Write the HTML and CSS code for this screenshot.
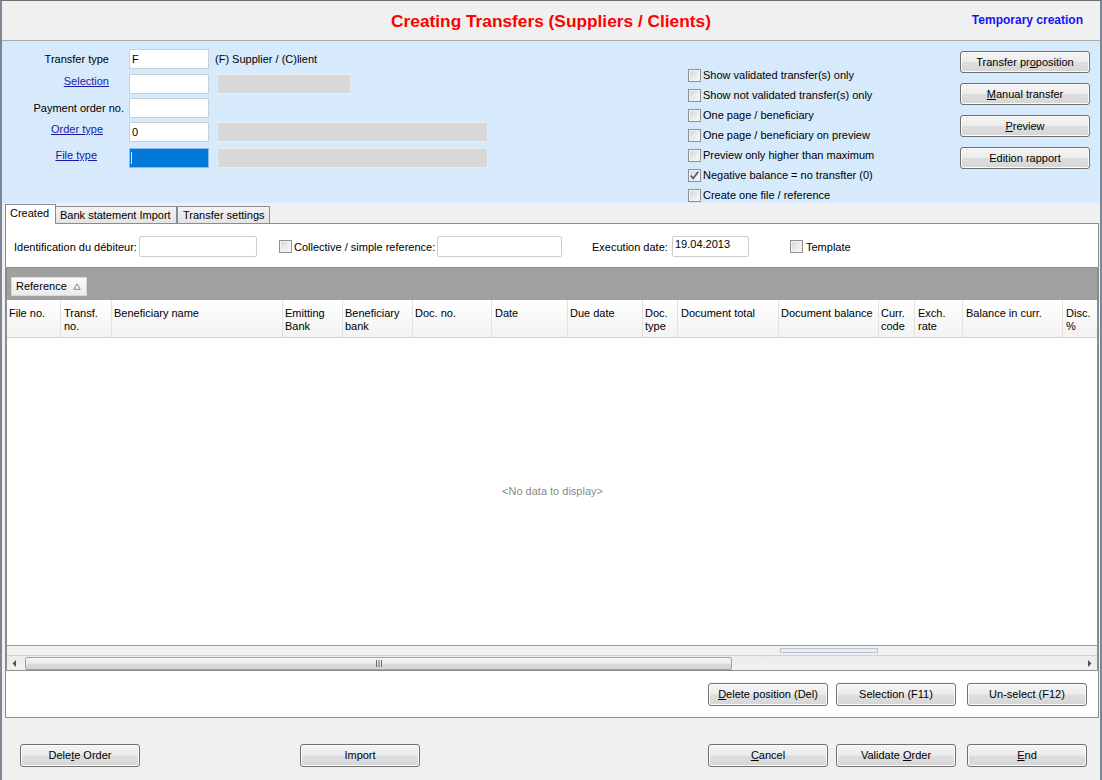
FILE: index.html
```html
<!DOCTYPE html>
<html>
<head>
<meta charset="utf-8">
<link rel="stylesheet" href="styles.css">
</head>
<body>
<div class="window">
  <div class="header">
    <div></div>
    <div class="title">Creating Transfers (Suppliers / Clients)</div>
    <div class="status">Temporary creation</div>
  </div>

  <div class="params">
    <div class="form">
      <div class="frow">
        <span class="lbl pr20">Transfer type</span>
        <span class="inp">F</span>
        <span class="hint">(F) Supplier / (C)lient</span>
      </div>
      <div class="frow mt5">
        <a class="lbl link pr20">Selection</a>
        <span class="inp"></span>
        <span class="ro w134"></span>
      </div>
      <div class="frow mt4">
        <span class="lbl pr5">Payment order no.</span>
        <span class="inp"></span>
      </div>
      <div class="frow mt4">
        <a class="lbl link pr26">Order type</a>
        <span class="inp">0</span>
        <span class="ro w271"></span>
      </div>
      <div class="frow mt6">
        <a class="lbl link pr32">File type</a>
        <span class="inp focus"><span class="caret"></span></span>
        <span class="ro w271"></span>
      </div>
    </div>

    <div class="checks">
      <div class="chk"><span class="box"></span>Show validated transfer(s) only</div>
      <div class="chk"><span class="box"></span>Show not validated transfer(s) only</div>
      <div class="chk"><span class="box"></span>One page / beneficiary</div>
      <div class="chk"><span class="box"></span>One page / beneficiary on preview</div>
      <div class="chk"><span class="box"></span>Preview only higher than maximum</div>
      <div class="chk"><span class="box checked"><svg width="11" height="11" viewBox="0 0 11 11"><path d="M1.8 5.6 L4.2 8.4 L9.2 1.8" fill="none" stroke="#4a5a85" stroke-width="1.7"/></svg></span>Negative balance = no transfter (0)</div>
      <div class="chk"><span class="box"></span>Create one file / reference</div>
    </div>

    <div class="actions">
      <div class="btn act"><span>Transfer pr<u>o</u>position</span></div>
      <div class="btn act"><span><u>M</u>anual transfer</span></div>
      <div class="btn act"><span><u>P</u>review</span></div>
      <div class="btn act"><span>Edition rapport</span></div>
    </div>
  </div>

  <div class="tabs">
    <div class="tab active">Created</div>
    <div class="tab t2">Bank statement Import</div>
    <div class="tab t3">Transfer settings</div>
  </div>

  <div class="panel">
    <div class="filters">
      <span class="flbl w125">Identification du débiteur:</span>
      <span class="finp w118"></span>
      <span class="box ml22"></span>
      <span class="flbl w143">Collective / simple reference:</span>
      <span class="finp w125"></span>
      <span class="flbl w80 ml30">Execution date:</span>
      <span class="finp w77">19.04.2013</span>
      <span class="box ml41"></span>
      <span class="flbl ml3">Template</span>
    </div>

    <div class="grid">
      <div class="groupbar">
        <div class="groupchip">Reference <svg class="sorttri" width="8" height="7" viewBox="0 0 8 7"><path d="M4 0.8 L7.3 6.3 L0.7 6.3 Z" fill="none" stroke="#8a8a8a" stroke-width="1"/></svg></div>
      </div>
      <div class="colheads">
        <div class="col c1">File no.</div>
        <div class="col c2">Transf.<br>no.</div>
        <div class="col c3">Beneficiary name</div>
        <div class="col c4">Emitting<br>Bank</div>
        <div class="col c5">Beneficiary<br>bank</div>
        <div class="col c6">Doc. no.</div>
        <div class="col c7">Date</div>
        <div class="col c8">Due date</div>
        <div class="col c9">Doc.<br>type</div>
        <div class="col c10">Document total</div>
        <div class="col c11">Document balance</div>
        <div class="col c12">Curr.<br>code</div>
        <div class="col c13">Exch.<br>rate</div>
        <div class="col c14">Balance in curr.</div>
        <div class="col c15">Disc.<br>%</div>
      </div>
      <div class="gbody">&lt;No data to display&gt;</div>
      <div class="gstrip"><span class="gmark"></span></div>
      <div class="hscroll">
        <span class="arrow"><svg width="5" height="7" viewBox="0 0 5 7"><path d="M4 0 L0.5 3.5 L4 7 Z" fill="#555"/></svg></span>
        <span class="thumb"><svg class="grip" width="8" height="7" viewBox="0 0 8 7"><path d="M1.5 0 V7 M4 0 V7 M6.5 0 V7" stroke="#6a6a6a" stroke-width="1"/></svg></span>
        <span class="track"></span>
        <span class="arrow"><svg width="5" height="7" viewBox="0 0 5 7"><path d="M1 0 L4.5 3.5 L1 7 Z" fill="#555"/></svg></span>
      </div>
    </div>

    <div class="rowbtns">
      <div class="btn sm mr8"><span><u>D</u>elete position (Del)</span></div>
      <div class="btn sm mr11"><span>Selection (F11)</span></div>
      <div class="btn sm"><span>Un-select (F12)</span></div>
    </div>
  </div>

  <div class="footer">
    <div class="btn sm fb1"><span>Dele<u>t</u>e Order</span></div>
    <div class="btn sm fb2"><span>Import</span></div>
    <div class="btn sm fb3"><span><u>C</u>ancel</span></div>
    <div class="btn sm mr11"><span>Validate <u>O</u>rder</span></div>
    <div class="btn sm"><span><u>E</u>nd</span></div>
  </div>
</div>
</body>
</html>
```

FILE: styles.css
```css
html, body {
  margin: 0;
  padding: 0;
}
body {
  width: 1102px;
  height: 780px;
  overflow: hidden;
  font-family: "Liberation Sans", Arial, sans-serif;
  font-size: 11px;
  line-height: 13px;
  color: #000;
  background: #f0f0f0;
}
.window {
  box-sizing: border-box;
  width: 1102px;
  height: 780px;
  border-left: 2px solid #7c8796;
  border-right: 2px solid #7c8796;
  border-top: 1px solid #6f6f6f;
  background: #f0f0f0;
  display: flex;
  flex-direction: column;
}

/* header */
.header {
  height: 39px;
  border-bottom: 1px solid #a9a9a9;
  display: grid;
  grid-template-columns: 1fr auto 1fr;
  align-items: center;
  flex: none;
}
.title {
  color: #ff0000;
  font-weight: bold;
  font-size: 17.3px;
  line-height: 20px;
  padding-top: 1px;
}
.status {
  justify-self: end;
  padding-right: 17px;
  color: #1414f5;
  font-weight: bold;
  font-size: 12px;
  padding-bottom: 1px;
}

/* parameter panel */
.params {
  height: 162px;
  background: #d6eafb;
  display: flex;
  flex: none;
}
.form {
  width: 686px;
  flex: none;
  padding-top: 8px;
  box-sizing: border-box;
}
.frow {
  display: flex;
  align-items: center;
  height: 20px;
}
.mt4 { margin-top: 4px; }
.mt5 { margin-top: 5px; }
.mt6 { margin-top: 6px; }
.lbl {
  width: 127px;
  box-sizing: border-box;
  text-align: right;
  flex: none;
}
.link {
  color: #1a1aa6;
  text-decoration: underline;
  align-self: flex-start;
  margin-top: 1px;
}
.pr5 { padding-right: 5px; }
.pr20 { padding-right: 20px; }
.pr26 { padding-right: 26px; }
.pr32 { padding-right: 32px; }
.inp {
  width: 80px;
  height: 20px;
  box-sizing: border-box;
  background: #fff;
  border: 1px solid #c9d0d8;
  padding: 3px 0 0 2px;
  flex: none;
  position: relative;
}
.inp.focus {
  background: #0078d7;
  border-color: #8fbbe6;
}
.caret {
  position: absolute;
  left: 1px;
  top: 3px;
  width: 1px;
  height: 12px;
  background: #e8e8d0;
}
.hint {
  margin-left: 6px;
}
.ro {
  height: 20px;
  box-sizing: border-box;
  margin-left: 8px;
  background: #d8d8d8;
  border: 1px solid #ebebeb;
  flex: none;
}
.w134 { width: 134px; }
.w271 { width: 271px; }

.checks {
  width: 272px;
  flex: none;
  padding-top: 24px;
  box-sizing: border-box;
}
.chk {
  display: flex;
  align-items: center;
  height: 20px;
  white-space: nowrap;
}
.box {
  width: 13px;
  height: 13px;
  box-sizing: border-box;
  border: 1px solid #8e8f8f;
  background: linear-gradient(135deg, #cfd3d8 0%, #eceef0 60%, #f8f8f8 100%);
  box-shadow: inset 0 0 0 1px #f3f3f3;
  margin-right: 2px;
  flex: none;
  display: inline-flex;
  align-items: center;
  justify-content: center;
}
.box svg { display: block; }

.actions {
  padding-top: 10px;
  display: flex;
  flex-direction: column;
  gap: 10px;
}
.btn {
  box-sizing: border-box;
  border: 1px solid #707070;
  border-radius: 3px;
  background: linear-gradient(#f4f4f4 0%, #ececec 48%, #dedede 52%, #d6d6d6 100%);
  box-shadow: inset 0 0 0 1px #fbfbfb;
  display: flex;
  align-items: center;
  justify-content: center;
  white-space: nowrap;
  flex: none;
}
.act {
  width: 130px;
  height: 22px;
}
.sm {
  width: 120px;
  height: 23px;
}

/* tabs */
.tabs {
  height: 20px;
  display: flex;
  align-items: flex-end;
  padding-left: 3px;
  flex: none;
}
.tab {
  box-sizing: border-box;
  border: 1px solid #898c95;
  border-bottom: none;
  white-space: nowrap;
}
.tab.active {
  width: 51px;
  height: 20px;
  margin-bottom: -1px;
  background: #fff;
  position: relative;
  z-index: 1;
  padding: 2px 0 0 4px;
}
.tab.t2 {
  width: 121px;
  height: 17px;
  padding: 2px 0 0 4px;
  background: linear-gradient(#f3f3f3, #e4e4e4);
  border-left: none;
}
.tab.t3 {
  width: 93px;
  height: 17px;
  padding: 2px 0 0 5px;
  background: linear-gradient(#f3f3f3, #e4e4e4);
  border-left: 1px solid #898c95;
}

/* tab panel */
.panel {
  box-sizing: border-box;
  height: 495px;
  margin: 0 1px 0 3px;
  border: 1px solid #898c95;
  background: #fff;
  flex: none;
  display: flex;
  flex-direction: column;
}
.filters {
  display: flex;
  align-items: center;
  height: 21px;
  margin-top: 12px;
  padding-left: 8px;
  white-space: nowrap;
}
.flbl { flex: none; padding-top: 2px; }
.w125 { width: 125px; }
.w143 { width: 143px; }
.w80 { width: 80px; }
.finp {
  box-sizing: border-box;
  height: 21px;
  border: 1px solid #cdcdcd;
  border-radius: 2px;
  background: #fff;
  padding: 1px 0 0 2px;
  flex: none;
}
.w118 { width: 118px; }
.w77 { width: 77px; }
.ml3 { margin-left: 1px; }
.ml22 { margin-left: 22px; }
.ml30 { margin-left: 30px; }
.ml41 { margin-left: 41px; }

.grid {
  margin-top: 10px;
  box-sizing: border-box;
  border: 1px solid #8c8c8c;
  display: flex;
  flex-direction: column;
  flex: none;
}
.groupbar {
  height: 32px;
  background: #a0a0a0;
  box-sizing: border-box;
  padding: 9px 0 0 4px;
}
.groupchip {
  width: 76px;
  height: 19px;
  box-sizing: border-box;
  background: linear-gradient(#fafafa, #ececec);
  border: 1px solid #d8d8d8;
  display: flex;
  align-items: center;
  padding-left: 4px;
}
.sorttri {
  margin-left: 6px;
  display: block;
}
.colheads {
  height: 38px;
  box-sizing: border-box;
  display: flex;
  background: linear-gradient(#ffffff, #f3f3f3);
  border-bottom: 1px solid #d2d2d2;
}
.col {
  box-sizing: border-box;
  border-right: 1px solid #e2e2e2;
  padding: 7px 0 0 2px;
  white-space: nowrap;
  overflow: hidden;
  flex: none;
}
.c1 { width: 54px; }
.c2 { width: 51px; padding-left: 3px; }
.c3 { width: 171px; }
.c4 { width: 60px; }
.c5 { width: 70px; }
.c6 { width: 79px; }
.c7 { width: 76px; padding-left: 3px; }
.c8 { width: 75px; }
.c9 { width: 35px; }
.c10 { width: 101px; padding-left: 3px; }
.c11 { width: 100px; }
.c12 { width: 36px; }
.c13 { width: 48px; padding-left: 3px; }
.c14 { width: 100px; padding-left: 3px; }
.c15 { flex: 1; border-right: none; padding-left: 3px; }
.gbody {
  height: 307px;
  background: #fff;
  color: #8a8a8a;
  display: flex;
  align-items: center;
  justify-content: center;
  padding-left: 1px;
  box-sizing: border-box;
}
.gstrip {
  height: 11px;
  box-sizing: border-box;
  border-top: 1px solid #9a9a9a;
  border-bottom: 1px solid #cfcfcf;
  background: #f0f0f0;
  padding: 2px 0 0 773px;
}
.gmark {
  display: block;
  width: 98px;
  height: 5px;
  box-sizing: border-box;
  border: 1px solid #bcc5ce;
  background: #e9eef2;
}
.hscroll {
  height: 14px;
  display: flex;
  align-items: center;
  background: linear-gradient(#ececec, #f2f2f2);
}
.arrow {
  width: 15px;
  height: 14px;
  display: flex;
  align-items: center;
  justify-content: center;
  flex: none;
}
.thumb {
  margin-left: 3px;
  width: 707px;
  height: 13px;
  box-sizing: border-box;
  border: 1px solid #a3a3a3;
  border-radius: 2px;
  background: linear-gradient(#f5f5f5 0%, #e9e9e9 50%, #dcdcdc 51%, #d4d4d4 100%);
  display: flex;
  align-items: center;
  justify-content: center;
  flex: none;
}
.grip { display: block; }
.track { flex: 1; }

.rowbtns {
  display: flex;
  justify-content: flex-end;
  padding-right: 11px;
  margin-top: 12px;
}
.mr8 { margin-right: 8px; }
.mr11 { margin-right: 11px; }

/* footer */
.footer {
  flex: 1;
  display: flex;
  padding: 26px 13px 0 0;
  align-items: flex-start;
}
.fb1 { margin-left: 18px; }
.fb2 { margin-left: 160px; }
.fb3 { margin-left: auto; margin-right: 8px; }
```
